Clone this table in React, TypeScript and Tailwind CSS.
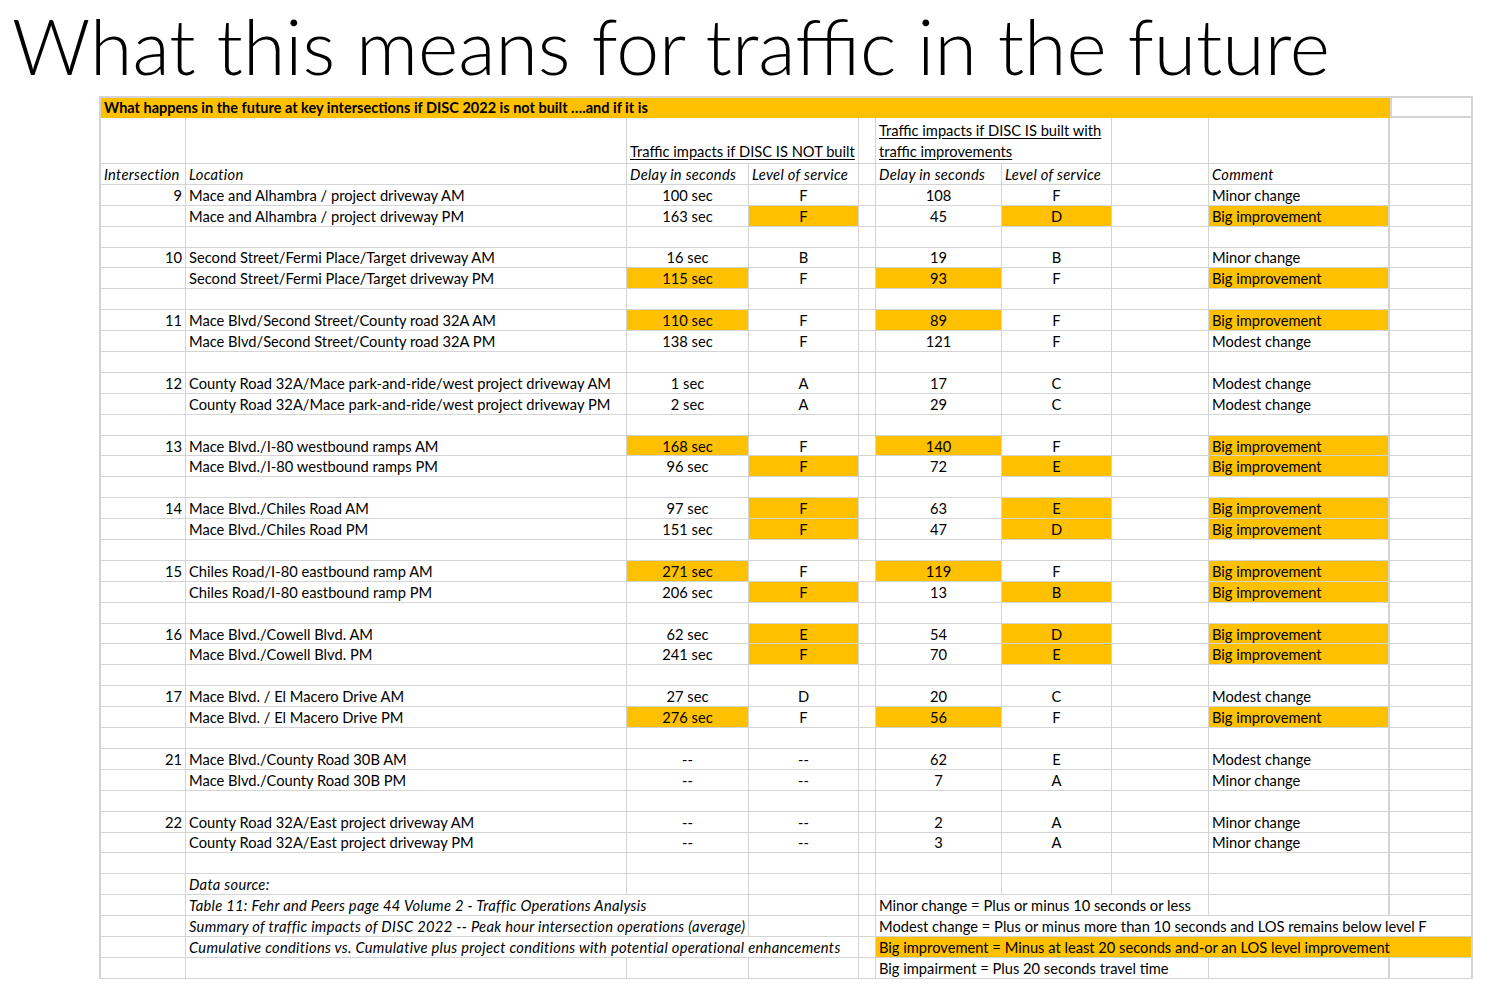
import React from 'react';

type Row = {
  n?: string;
  loc: string;
  d1: string;
  l1: string;
  d2: string;
  l2: string;
  c: string;
  hl: string; // which cells are highlighted: d1 l1 d2 l2 c
};

const rows: (Row | null)[] = [
  { n: '9', loc: 'Mace and Alhambra / project driveway AM', d1: '100 sec', l1: 'F', d2: '108', l2: 'F', c: 'Minor change', hl: '' },
  { loc: 'Mace and Alhambra / project driveway PM', d1: '163 sec', l1: 'F', d2: '45', l2: 'D', c: 'Big improvement', hl: 'l1 l2 c' },
  null,
  { n: '10', loc: 'Second Street/Fermi Place/Target driveway  AM', d1: '16 sec', l1: 'B', d2: '19', l2: 'B', c: 'Minor change', hl: '' },
  { loc: 'Second Street/Fermi Place/Target driveway PM', d1: '115 sec', l1: 'F', d2: '93', l2: 'F', c: 'Big improvement', hl: 'd1 d2 c' },
  null,
  { n: '11', loc: 'Mace Blvd/Second Street/County road 32A AM', d1: '110 sec', l1: 'F', d2: '89', l2: 'F', c: 'Big improvement', hl: 'd1 d2 c' },
  { loc: 'Mace Blvd/Second Street/County road 32A PM', d1: '138 sec', l1: 'F', d2: '121', l2: 'F', c: 'Modest change', hl: '' },
  null,
  { n: '12', loc: 'County Road 32A/Mace park-and-ride/west project driveway AM', d1: '1 sec', l1: 'A', d2: '17', l2: 'C', c: 'Modest change', hl: '' },
  { loc: 'County Road 32A/Mace park-and-ride/west project driveway PM', d1: '2 sec', l1: 'A', d2: '29', l2: 'C', c: 'Modest change', hl: '' },
  null,
  { n: '13', loc: 'Mace Blvd./I-80 westbound ramps AM', d1: '168 sec', l1: 'F', d2: '140', l2: 'F', c: 'Big improvement', hl: 'd1 d2 c' },
  { loc: 'Mace Blvd./I-80 westbound ramps PM', d1: '96 sec', l1: 'F', d2: '72', l2: 'E', c: 'Big improvement', hl: 'l1 l2 c' },
  null,
  { n: '14', loc: 'Mace Blvd./Chiles Road AM', d1: '97 sec', l1: 'F', d2: '63', l2: 'E', c: 'Big improvement', hl: 'l1 l2 c' },
  { loc: 'Mace Blvd./Chiles Road PM', d1: '151 sec', l1: 'F', d2: '47', l2: 'D', c: 'Big improvement', hl: 'l1 l2 c' },
  null,
  { n: '15', loc: 'Chiles Road/I-80 eastbound ramp AM', d1: '271 sec', l1: 'F', d2: '119', l2: 'F', c: 'Big improvement', hl: 'd1 d2 c' },
  { loc: 'Chiles Road/I-80 eastbound ramp  PM', d1: '206 sec', l1: 'F', d2: '13', l2: 'B', c: 'Big improvement', hl: 'l1 l2 c' },
  null,
  { n: '16', loc: 'Mace Blvd./Cowell Blvd. AM', d1: '62 sec', l1: 'E', d2: '54', l2: 'D', c: 'Big improvement', hl: 'l1 l2 c' },
  { loc: 'Mace Blvd./Cowell Blvd. PM', d1: '241 sec', l1: 'F', d2: '70', l2: 'E', c: 'Big improvement', hl: 'l1 l2 c' },
  null,
  { n: '17', loc: 'Mace Blvd. / El Macero Drive AM', d1: '27 sec', l1: 'D', d2: '20', l2: 'C', c: 'Modest change', hl: '' },
  { loc: 'Mace Blvd. / El Macero Drive PM', d1: '276 sec', l1: 'F', d2: '56', l2: 'F', c: 'Big improvement', hl: 'd1 d2 c' },
  null,
  { n: '21', loc: 'Mace Blvd./County Road 30B AM', d1: '--', l1: '--', d2: '62', l2: 'E', c: 'Modest change', hl: '' },
  { loc: 'Mace Blvd./County Road 30B PM', d1: '--', l1: '--', d2: '7', l2: 'A', c: 'Minor change', hl: '' },
  null,
  { n: '22', loc: 'County Road 32A/East project driveway AM', d1: '--', l1: '--', d2: '2', l2: 'A', c: 'Minor change', hl: '' },
  { loc: 'County Road 32A/East project driveway PM', d1: '--', l1: '--', d2: '3', l2: 'A', c: 'Minor change', hl: '' },
  null,
];

const cell = 'h-[20.9px] border-r border-b border-[#d4d4d4] flex items-center px-[3px] whitespace-nowrap overflow-hidden';
const gold = 'bg-[#ffc000]';
const it = 'italic tracking-[0.3px]';

const DataRow: React.FC<{ r: Row | null }> = ({ r }) => {
  if (!r) {
    return (
      <>
        <div className={cell} />
        <div className={cell} />
        <div className={cell} />
        <div className={cell} />
        <div className={cell} />
        <div className={cell} />
        <div className={cell} />
        <div className={cell} />
        <div className={`${cell} border-r-2`} />
        <div className={`${cell} border-r-2`} />
      </>
    );
  }
  const on = (k: string) => r.hl.split(' ').includes(k);
  return (
    <>
      <div className={`${cell} justify-end`}>{r.n}</div>
      <div className={cell}>{r.loc}</div>
      <div className={`${cell} justify-center ${on('d1') ? gold : ''}`}>{r.d1}</div>
      <div className={`${cell} justify-center ${on('l1') ? gold : ''}`}>{r.l1}</div>
      <div className={cell} />
      <div className={`${cell} justify-center ${on('d2') ? gold : ''}`}>{r.d2}</div>
      <div className={`${cell} justify-center ${on('l2') ? gold : ''}`}>{r.l2}</div>
      <div className={cell} />
      <div className={`${cell} border-r-2 ${on('c') ? gold : ''}`}>{r.c}</div>
      <div className={`${cell} border-r-2`} />
    </>
  );
};

const App: React.FC = () => {
  return (
    <div className="w-[1500px] h-[1008px] bg-white text-black overflow-hidden" style={{ fontFamily: 'Lato, "Open Sans", sans-serif' }}>
      {/* Slide title */}
      <div className="h-[96px] pl-[12px] pt-[2px]">
        <h1 className="text-[77px] leading-[86px] font-light whitespace-nowrap">What this means for traffic in the future</h1>
      </div>

      {/* Spreadsheet */}
      <div className="ml-[99px] w-[1374px] border-l-2 border-t-2 border-[#d4d4d4] text-[14.7px] grid grid-cols-[85px_441px_122px_110px_17px_126px_110px_97px_181px_83px]">
        {/* title row */}
        <div className={`col-span-9 h-[20px] ${gold} flex items-center px-[3px] font-bold text-[14.5px] whitespace-nowrap`}>
          What happens in the future at key intersections if DISC 2022 is not built ….and if it is
        </div>
        <div className="h-[20px] border-r-2 border-b-2 border-l-2 border-[#d4d4d4]" />

        {/* group header row */}
        <div className="h-[46px] border-r border-b border-[#d4d4d4]" />
        <div className="h-[46px] border-r border-b border-[#d4d4d4]" />
        <div className="col-span-2 h-[46px] border-r border-b border-[#d4d4d4] flex items-end px-[3px] pb-[1px]">
          <span className="underline underline-offset-2 leading-[21px] whitespace-nowrap">Traffic impacts if DISC IS NOT built</span>
        </div>
        <div className="h-[46px] border-r border-b border-[#d4d4d4]" />
        <div className="col-span-2 h-[46px] border-r border-b border-[#d4d4d4] flex flex-col justify-end px-[3px] pb-[1px]">
          <span className="underline underline-offset-2 leading-[21px] whitespace-nowrap">Traffic impacts if DISC IS built with</span>
          <span className="underline underline-offset-2 leading-[21px]">traffic improvements</span>
        </div>
        <div className="h-[46px] border-r border-b border-[#d4d4d4]" />
        <div className="h-[46px] border-r-2 border-b border-[#d4d4d4]" />
        <div className="h-[46px] border-r-2 border-b border-[#d4d4d4]" />

        {/* column labels */}
        <div className={`${cell} ${it}`}>Intersection</div>
        <div className={`${cell} ${it}`}>Location</div>
        <div className={`${cell} ${it}`}>Delay in seconds</div>
        <div className={`${cell} ${it}`}>Level of service</div>
        <div className={cell} />
        <div className={`${cell} ${it}`}>Delay in seconds</div>
        <div className={`${cell} ${it}`}>Level of service</div>
        <div className={cell} />
        <div className={`${cell} border-r-2 ${it}`}>Comment</div>
        <div className={`${cell} border-r-2`} />

        {rows.map((r, i) => (
          <DataRow key={i} r={r} />
        ))}

        {/* footer: data source and legend */}
        <div className={cell} />
        <div className={`${cell} ${it}`}>Data source:</div>
        <div className={cell} />
        <div className={cell} />
        <div className={cell} />
        <div className={cell} />
        <div className={cell} />
        <div className={cell} />
        <div className={`${cell} border-r-2`} />
        <div className={`${cell} border-r-2`} />

        <div className={cell} />
        <div className={`${cell} col-span-2 ${it}`}>Table 11: Fehr and Peers page 44 Volume 2 - Traffic Operations Analysis</div>
        <div className={cell} />
        <div className={cell} />
        <div className={`${cell} col-span-3`}>Minor change = Plus or minus 10 seconds or less</div>
        <div className={`${cell} border-r-2`} />
        <div className={`${cell} border-r-2`} />

        <div className={cell} />
        <div className={`${cell} col-span-2 ${it}`}>Summary of traffic impacts of DISC 2022 -- Peak hour intersection operations (average)</div>
        <div className={cell} />
        <div className={cell} />
        <div className={`${cell} col-span-5 border-r-2`}>Modest change = Plus or minus more than 10 seconds and LOS remains below level F</div>

        <div className={cell} />
        <div className={`${cell} col-span-3 ${it}`}>Cumulative conditions vs. Cumulative plus project conditions with potential operational enhancements</div>
        <div className={cell} />
        <div className={`${cell} col-span-5 border-r-2 ${gold}`}>Big improvement = Minus at least 20 seconds and-or an LOS level improvement</div>

        <div className={cell} />
        <div className={cell} />
        <div className={cell} />
        <div className={cell} />
        <div className={cell} />
        <div className={`${cell} col-span-3`}>Big impairment = Plus 20 seconds travel time</div>
        <div className={`${cell} border-r-2`} />
        <div className={`${cell} border-r-2`} />
      </div>
    </div>
  );
};

export default App;
